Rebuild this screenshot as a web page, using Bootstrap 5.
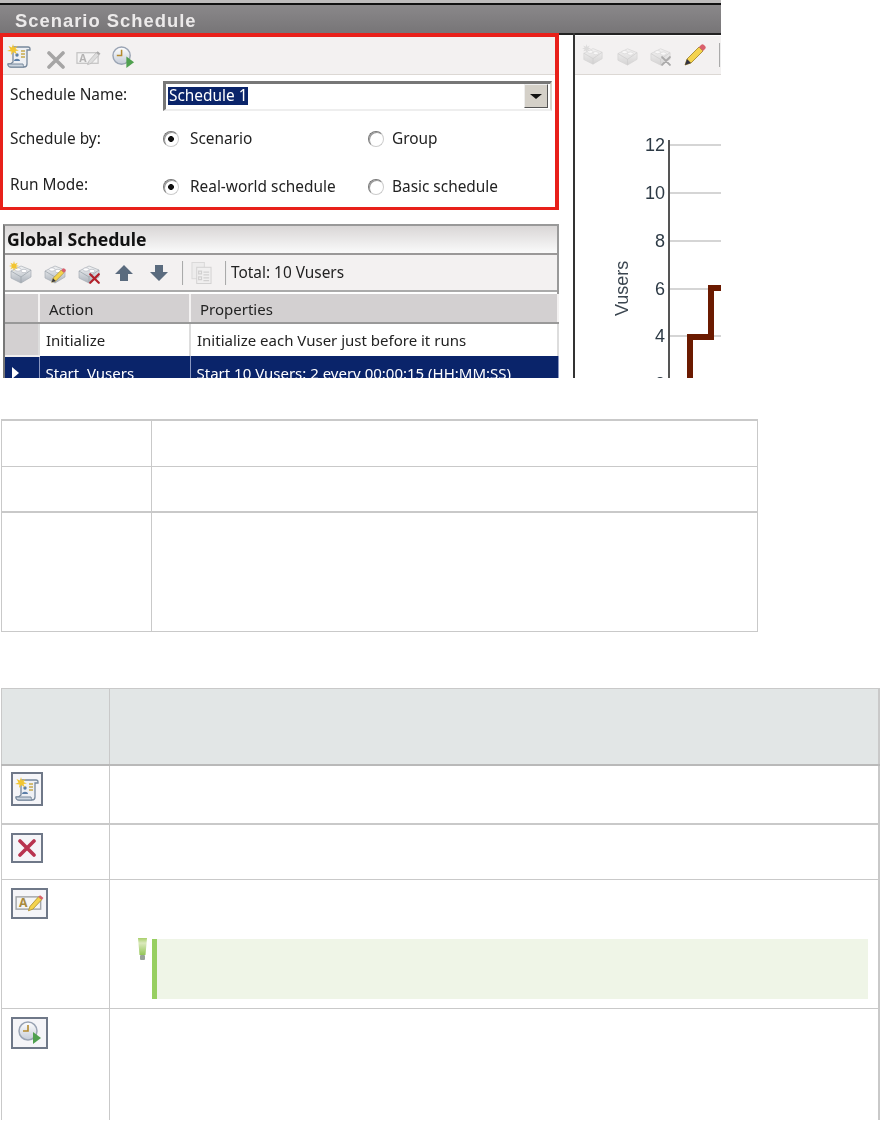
<!DOCTYPE html>
<html lang="en">
<head>
<meta charset="utf-8">
<title>Scenario Schedule</title>
<link href="https://cdn.jsdelivr.net/npm/bootstrap@5.3.0/dist/css/bootstrap.min.css" rel="stylesheet">
<style>
html,body{margin:0;background:#fff;height:1122px;overflow:hidden}
.shot{width:721px;height:378px;overflow:hidden;font-family:"Noto Sans","Open Sans",sans-serif;font-size:15.4px;line-height:18px;color:#222;filter:blur(.5px);background:#fff}
.strip{height:5px;background:#111;border-top:3px solid #bdbbbb;box-sizing:border-box}
.titlebar{height:28px;background:linear-gradient(#8a888a,#777577);color:#eceaea;font:700 18.4px/32px "Liberation Sans",sans-serif;letter-spacing:1px;padding-left:15px}
.panes{height:345px;box-shadow:inset 0 2px 0 #222}
.leftpane{width:559px;flex:none}
.redbox{height:177px;border:solid #e8201a;border-width:4px 4px 3px 3px;box-shadow:inset 0 1px 0 #222}
.tex{background:#f3f1f1;border-bottom:1px solid #dcd8d4}
.tb1{height:38px;padding-left:4px}
.formgrid{display:grid;grid-template-columns:153px 205px 1fr;padding-left:7px;padding-right:3px}
.namelab{padding-top:11px}
.combo{grid-column:2/4;height:30px;border:solid;border-color:#777 #d8d4cc #eee #777;border-width:3px 2px 2px 3px;padding:3px 2px 0 2px;margin-top:6px}
.sel{background:#0a246a;color:#fff;padding:0 1px;line-height:18px;display:inline-block}
.dd{width:24px;height:24px;background:#d4d0c8;border:1px solid;border-color:#eee #555 #555 #eee;margin-top:-3px}
.dd i{border:solid transparent;border-width:5px 6px 0;border-top-color:#111;display:block}
.rowa{height:55px}
.rowb{height:41px}
.shot input.form-check-input{width:16px;height:16px;margin:0 11px 0 0;flex:none;border:1px solid #777;border-right-color:#ccc;border-bottom-color:#ccc;background:#fff;box-shadow:inset 1px 1px 0 #999;float:none}
.shot input.form-check-input:checked{background:radial-gradient(circle,#111 0 2.6px,#fff 3.2px)}
.shot input.radio2{margin-right:8px}
.gs{margin:14px 0 0 3px;border:solid #999;border-width:2px 2px 0 2px;border-left-color:#777;height:154px}
.gshead{height:27px;background:linear-gradient(#d9d6d6,#fafafa);font:700 17.6px/27px "Noto Sans",sans-serif;color:#111;padding-left:2px;border-bottom:2px solid #9a9898;box-sizing:content-box}
.tb2{height:37px;padding-left:4px;border-bottom:2px solid #aaa}
.vsep{width:1px;height:24px;background:#aaa;box-shadow:1px 0 0 #eee}
.gridt{table-layout:fixed;width:554px;margin:2px 0 0;border-collapse:collapse;--bs-table-bg:transparent}
.gridt td,.gridt th{padding:0 0 0 6px;border:0;font-weight:400;font-size:15px;line-height:18px;color:#222;white-space:nowrap;overflow:hidden;box-shadow:none;vertical-align:middle}
.gridt tr{height:33px}
.gridt tr.gh{height:29px}
.gridt .gh th{background:#d3d0d1;border-bottom:2px solid #999;border-right:2px solid #f4f2f2;padding-left:9px;padding-top:2px}
.gridt .rh{background:#d3d0d1;border-right:2px solid #f4f2f2;border-bottom:2px solid #f0eeee;width:34px;padding:0}
.gridt .ini td{border-right:2px solid #ddd;background:#fff}
.gridt .cur td{background:#0a246a;color:#fff;border-right:1px solid #8a97c0}
.gridt .cur .rh{background:#0a246a}
.gridt .ini .rh{background:#d3d0d1}
.tri{display:block;width:0;height:0;margin-left:7px;border:solid transparent;border-width:6px 0 6px 7px;border-left-color:#fff}
.rightpane{margin-left:14px;border-left:2px solid #333;flex:1;height:345px}
.tb3{height:39px;margin-top:3px;padding-left:7px}
.chart{display:block}
.shot svg text{font-family:"Liberation Sans",sans-serif}
.ghost{opacity:.45;filter:grayscale(1)}
.ghost2{opacity:.6;filter:grayscale(1)}
.docs{border-collapse:collapse;table-layout:fixed;margin:0 0 0 1px;--bs-table-bg:transparent;--bs-border-color:#c9c9c9;--bs-table-border-color:#c9c9c9}
.docs td,.docs th{padding:0;border:1px solid #c9c9c9;box-shadow:none}
.t1{width:757px;margin-top:41px;margin-bottom:0}
.t1 td:first-child{width:150px}
.r1{height:46px}.r1 td{border-top-width:2px}
.r2{height:46px}
.r3{height:119px}.r3 td{border-top-width:2px}
.t2{width:879px;margin-top:56px;margin-bottom:0}
.t2 th:first-child,.t2 td:first-child{width:108px}
.t2 tr>*:last-child{border-right-width:2px}
.hd{height:77px}.hd th{background:#e2e6e6;border-bottom:2px solid #b9b9b9}
.i1{height:59px}.i1 td{border-bottom-width:2px}
.i2{height:55px}
.i3{height:129px}
.i4{height:112px}
.docs tr.i4,.docs tr.i4 td{border-bottom:0}
.t2 tbody{border-bottom:0}
.btnicon{display:block;margin:8px 0 0 9px;border:2px solid #6f7888;background:#f5f5f8;box-sizing:border-box}
.i1 .btnicon{margin-top:6px}
.notebox{height:60px;width:716px;border-left:5px solid #97cf60;background:#eff5e7;margin-top:59px}
.bang{margin:58px 5px 0 28px;flex:none}
</style>
</head>
<body>
<svg width="0" height="0" class="d-block" aria-hidden="true">
  <defs>
    <linearGradient id="gb" x1="0" y1="0" x2="0" y2="1"><stop offset="0" stop-color="#f4f5f6"/><stop offset="1" stop-color="#aab1ba"/></linearGradient>
    <linearGradient id="gf" x1="0" y1="0" x2="0" y2="1"><stop offset="0" stop-color="#fff"/><stop offset="1" stop-color="#c5ccd8"/></linearGradient>
    <linearGradient id="bangg" x1="0" y1="0" x2="0" y2="1"><stop offset="0" stop-color="#a8cf6a"/><stop offset=".3" stop-color="#dbe9bd"/><stop offset="1" stop-color="#93c656"/></linearGradient>
    <symbol id="scroll" viewBox="0 0 24 24">
      <path d="M6 3h15c1.500 0 2 1 2 2v1h-3v14c0 2-1 3-3 3H4c-2 0-3-1-3-3h2.500L6 18z" fill="#eef0f4" stroke="#77889c" stroke-width="1.300"/>
      <path d="M1 20h15c0 1 .5 2 1 3H4c-2 0-3-1-3-3z" fill="#ccd5df" stroke="#77889c"/>
      <path d="M14 7h4M14 10h4M14 13h4" stroke="#c9a94a" stroke-width="1.600"/>
      <circle cx="10" cy="11" r="1.700" fill="#5c7fa8"/><path d="M7 17c0-3 6-3 6 0z" fill="#5c7fa8"/>
      <path d="M6 0l1 3.500L10.500 2 8.500 5 12 6.500 8.500 7 10 10.500 6.500 8 4 11l.5-3.500L0 7l3.500-1.500L1.500 2 5 3.500z" fill="#f2c531"/>
    </symbol>
    <symbol id="cross" viewBox="0 0 18 18">
      <path d="M2 2l14 14M16 2L2 16" stroke="currentColor" stroke-width="3.600" fill="none" stroke-linecap="round"/>
    </symbol>
    <symbol id="apen" viewBox="0 0 26 16">
      <rect x="1" y="2.500" width="22" height="11" fill="#f5f5f5" stroke="#a3a6aa" stroke-width="1.300"/>
      <text x="3.500" y="12" font-size="11" font-weight="700" fill="#a98a3d">A</text>
      <path d="M12 15l1.500-4L21 2.500l3 2.500-8 8.500z" fill="#f4d34d" stroke="#a88a2c" stroke-width=".7"/>
      <path d="M21 2.500l1.500-1.500 3 2.500-1.500 1.500z" fill="#d9616b"/>
    </symbol>
    <symbol id="clockplay" viewBox="0 0 24 24">
      <circle cx="10" cy="10" r="9" fill="url(#gf)" stroke="#9aa4b4" stroke-width="1.500"/>
      <path d="M10 4v6H5" fill="none" stroke="#b58a2e" stroke-width="1.600"/>
      <path d="M15 11l8 6-8 6z" fill="#4fa04f"/>
    </symbol>
    <symbol id="brick" viewBox="0 0 24 24">
      <path d="M2 10l10-5 10 4v7l-10 6-10-5z" fill="url(#gb)" stroke="#a7adb5" stroke-width=".7" stroke-linejoin="round"/>
      <path d="M2 10l10 6 10-7M12 16v6" fill="none" stroke="#98a0a8" stroke-width=".7"/>
      <ellipse cx="9" cy="8.500" rx="3" ry="1.700" fill="#fff" stroke="#b4b8c0" stroke-width=".7"/>
      <ellipse cx="15" cy="10" rx="3" ry="1.700" fill="#fff" stroke="#b4b8c0" stroke-width=".7"/>
    </symbol>
    <symbol id="star" viewBox="0 0 12 12"><path d="M6 0l1 3.500L10.500 2 8.500 5 12 6 8.500 7l2 3L7 8.500 6 12 5 8.500 1.500 10l2-3L0 6l3.500-1-2-3L5 3.500z" fill="#f2c531"/></symbol>
    <symbol id="pencil" viewBox="0 0 22 22">
      <path d="M1 21l2-6L15 3l4 4L7 19z" fill="#f4d34d" stroke="#9c8026" stroke-width=".8"/>
      <path d="M15 3l2-2c1-1 2-1 3 0l1 1c1 1 1 2 0 3l-2 2z" fill="#d9606c"/>
      <path d="M1 21l2-6 4 4z" fill="#334"/>
    </symbol>
    <symbol id="arrow" viewBox="0 0 18 16">
      <path d="M9 0l9 9h-5v7H5V9H0z" fill="#5a6b7e"/>
    </symbol>
    <symbol id="sheets" viewBox="0 0 22 24">
      <rect x="1" y="1" width="13" height="17" fill="#e6e6e6" stroke="#bbb"/>
      <rect x="6" y="6" width="15" height="17" fill="#eee" stroke="#aaa"/>
      <path d="M8 10h3v3H8zM8 16h3v3H8zM13 11h6M13 14h6M13 17h6M13 20h6" fill="none" stroke="#aaa" stroke-width="1.300"/>
    </symbol>
  </defs>
</svg>

<div class="shot">
  <div class="strip"></div>
  <div class="titlebar">Scenario Schedule</div>
  <div class="panes d-flex">
    <div class="leftpane">
      <div class="redbox">
        <div class="tex tb1 d-flex align-items-center">
          <svg width="24" height="24"><use href="#scroll"/></svg>
          <svg width="18" height="18" class="ms-3 mt-2 text-secondary ghost2"><use href="#cross"/></svg>
          <svg width="25" height="16" class="ghost2 mt-1" style="margin-left:11px"><use href="#apen"/></svg>
          <svg width="23" height="23" class="mt-1" style="margin-left:11px"><use href="#clockplay"/></svg>
        </div>
        <div class="formgrid">
          <div class="namelab">Schedule Name:</div>
          <div class="combo d-flex justify-content-between align-items-start">
            <span class="sel">Schedule 1</span>
            <span class="dd d-flex align-items-center justify-content-center"><i></i></span>
          </div>
          <div class="rowa d-flex align-items-center">Schedule by:</div>
          <div class="rowa d-flex align-items-center"><input class="form-check-input" type="radio" name="by" checked aria-label="Scenario">Scenario</div>
          <div class="rowa d-flex align-items-center"><input class="form-check-input radio2" type="radio" name="by" aria-label="Group">Group</div>
          <div class="rowb d-flex align-items-center pb-1">Run Mode:</div>
          <div class="rowb d-flex align-items-center"><input class="form-check-input" type="radio" name="rm" checked aria-label="Real-world schedule">Real-world schedule</div>
          <div class="rowb d-flex align-items-center"><input class="form-check-input radio2" type="radio" name="rm" aria-label="Basic schedule">Basic schedule</div>
        </div>
      </div>
      <div class="gs">
        <div class="gshead">Global Schedule</div>
        <div class="tex tb2 d-flex align-items-center">
          <svg width="24" height="24"><use href="#brick"/><use href="#star" width="10" height="10"/></svg>
          <svg width="24" height="24" style="margin-left:10px"><use href="#brick"/><use href="#pencil" x="8" y="7" width="15" height="15"/></svg>
          <svg width="24" height="24" style="margin-left:10px"><use href="#brick"/><use href="#cross" x="12" y="12" width="11" height="11" color="#b3202a"/></svg>
          <svg width="18" height="16" style="margin-left:14px"><use href="#arrow"/></svg>
          <svg width="18" height="16" style="margin-left:17px;transform:scaleY(-1)"><use href="#arrow"/></svg>
          <span class="vsep" style="margin-left:14px"></span>
          <svg width="21" height="24" class="ghost" style="margin-left:8px"><use href="#sheets"/></svg>
          <span class="vsep" style="margin-left:13px"></span>
          <span style="margin-left:5px">Total: 10 Vusers</span>
        </div>
        <table class="table gridt">
          <tbody>
            <tr class="gh"><th class="rh" style="width:34px"></th><th style="width:151px">Action</th><th>Properties</th></tr>
            <tr class="ini"><td class="rh"></td><td>Initialize</td><td>Initialize each Vuser just before it runs</td></tr>
            <tr class="cur"><td class="rh"><span class="tri"></span></td><td>Start&nbsp; Vusers</td><td>Start 10 Vusers: 2 every 00:00:15 (HH:MM:SS)</td></tr>
          </tbody>
        </table>
      </div>
    </div>
    <div class="rightpane">
      <div class="tex tb3 d-flex align-items-center">
        <svg width="22" height="22" class="ghost"><use href="#brick"/><use href="#star" width="9" height="9"/></svg>
        <svg width="23" height="23" class="ghost" style="margin-left:12px"><use href="#brick"/></svg>
        <svg width="23" height="23" class="ghost" style="margin-left:10px"><use href="#brick"/><use href="#cross" x="12" y="12" width="10" height="10" color="#555"/></svg>
        <svg width="22" height="22" style="margin-left:12px"><use href="#pencil"/></svg>
        <span class="vsep" style="margin-left:13px"></span>
      </div>
      <svg class="chart" width="146" height="303" viewBox="575 75 146 303">
        <g stroke="#c8c8c8" stroke-width="1.500">
          <path d="M669 145H721M669 193H721M669 241H721M669 289H721M669 336H721"/>
        </g>
        <path d="M669 140V378" stroke="#555" stroke-width="2"/>
        <g font-size="18" text-anchor="end" fill="#2d3a45">
          <text x="665" y="151">12</text>
          <text x="665" y="199">10</text>
          <text x="665" y="247">8</text>
          <text x="665" y="295">6</text>
          <text x="665" y="342">4</text>
          <text x="665" y="390">2</text>
        </g>
        <text font-size="18" fill="#3b4650" transform="translate(628 316) rotate(-90)">Vusers</text>
        <path d="M690 378V337H711V288H721" fill="none" stroke="#6b1a00" stroke-width="6"/>
      </svg>
    </div>
  </div>
</div>

<table class="table table-bordered docs t1">
  <tbody>
    <tr class="r1"><td></td><td></td></tr>
    <tr class="r2"><td></td><td></td></tr>
    <tr class="r3"><td></td><td></td></tr>
  </tbody>
</table>

<table class="table table-bordered docs t2">
  <thead><tr class="hd"><th></th><th></th></tr></thead>
  <tbody>
    <tr class="i1 align-top"><td><svg class="btnicon" width="32" height="34" viewBox="-2 -3 28 30"><use href="#scroll" width="24" height="24"/></svg></td><td></td></tr>
    <tr class="i2 align-top"><td><svg class="btnicon" width="32" height="30" viewBox="-5 -4 28 26" color="#b9344f"><use href="#cross" width="18" height="18"/></svg></td><td></td></tr>
    <tr class="i3 align-top"><td><svg class="btnicon" width="37" height="31" viewBox="-2 -4 33 27"><use href="#apen" width="29" height="18"/></svg></td>
      <td><div class="d-flex align-items-start">
        <svg class="bang" width="9" height="22" viewBox="0 0 9 22"><path d="M0 0h9L7.500 17h-6z" fill="url(#bangg)"/><rect x="2" y="17" width="5" height="5" rx="1" fill="#98a398"/></svg>
        <div class="notebox"></div>
      </div></td></tr>
    <tr class="i4 align-top"><td><svg class="btnicon" width="37" height="32" viewBox="-5 -2 33 28"><use href="#clockplay" width="24" height="24"/></svg></td><td></td></tr>
  </tbody>
</table>
</body>
</html>
